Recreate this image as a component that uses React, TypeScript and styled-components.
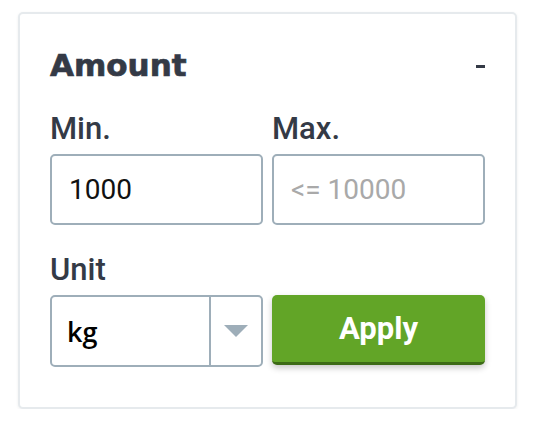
import styled, { createGlobalStyle } from 'styled-components';

const GlobalStyle = createGlobalStyle`
  html, body {
    margin: 0;
    padding: 0;
    background: #ffffff;
  }
  body {
    font-family: Roboto, "Liberation Sans", sans-serif;
  }
`;

const Page = styled.div`
  padding: 12px 0 0 18px;
`;

const Card = styled.section`
  box-sizing: border-box;
  width: 499px;
  height: 397px;
  padding: 33px 30px 0 30px;
  background: #ffffff;
  border: 2px solid #e6eaed;
  border-radius: 5px;
  box-shadow: 0 1px 3px rgba(40, 55, 70, 0.08);
`;

const Header = styled.header`
  display: flex;
  justify-content: space-between;
  align-items: center;
  height: 36px;
  margin-bottom: 28px;
`;

const Title = styled.h2`
  margin: 0;
  font-family: "DejaVu Sans", sans-serif;
  font-weight: 700;
  font-size: 31px;
  line-height: 36px;
  color: #343a46;
  -webkit-text-stroke: 0.7px #343a46;
`;

const Collapse = styled.span`
  display: block;
  width: 9px;
  height: 3px;
  margin-top: 2px;
  background: #343a46;
`;

const Grid = styled.div`
  display: grid;
  grid-template-columns: 213px 213px;
  column-gap: 9px;
  row-gap: 27px;
`;

const Field = styled.label`
  display: flex;
  flex-direction: column;
  gap: 7px;
`;

const Label = styled.span`
  font-family: Roboto, sans-serif;
  font-weight: 500;
  font-size: 31px;
  line-height: 36px;
  color: #343a46;
`;

const Input = styled.input`
  box-sizing: border-box;
  width: 100%;
  height: 71px;
  padding: 0 17px;
  border: 2px solid #9eaeb9;
  border-radius: 5px;
  font-family: Roboto, sans-serif;
  font-weight: 400;
  font-size: 28px;
  color: #111111;
  outline: none;
  &::placeholder {
    color: #a9a9a9;
  }
`;

const Select = styled.div`
  box-sizing: border-box;
  display: flex;
  height: 72px;
  border: 2px solid #9eaeb9;
  border-radius: 5px;
  overflow: hidden;
`;

const SelectValue = styled.div`
  flex: 1;
  display: flex;
  align-items: center;
  padding-left: 15px;
  font-family: "Open Sans", sans-serif;
  font-weight: 600;
  font-size: 27px;
  color: #000000;
`;

const SelectToggle = styled.div`
  width: 50px;
  display: flex;
  align-items: center;
  justify-content: center;
  border-left: 2px solid #9eaeb9;
`;

const Arrow = styled.span`
  width: 0;
  height: 0;
  border-left: 12px solid transparent;
  border-right: 12px solid transparent;
  border-top: 12px solid #9eaeb9;
`;

const ApplyButton = styled.button`
  align-self: end;
  box-sizing: border-box;
  height: 70px;
  margin-bottom: 2px;
  border: none;
  border-bottom: 3px solid #3d6b16;
  border-radius: 5px;
  background: #62a527;
  box-shadow: 0 3px 6px rgba(0, 0, 0, 0.22);
  color: #ffffff;
  font-family: Roboto, sans-serif;
  font-weight: 700;
  font-size: 31px;
  cursor: pointer;
`;

export default function App() {
  return (
    <>
      <GlobalStyle />
      <Page>
        <Card>
          <Header>
            <Title>Amount</Title>
            <Collapse />
          </Header>
          <Grid>
            <Field>
              <Label>Min.</Label>
              <Input defaultValue="1000" />
            </Field>
            <Field>
              <Label>Max.</Label>
              <Input placeholder="<= 10000" />
            </Field>
            <Field>
              <Label>Unit</Label>
              <Select>
                <SelectValue>kg</SelectValue>
                <SelectToggle>
                  <Arrow />
                </SelectToggle>
              </Select>
            </Field>
            <ApplyButton>Apply</ApplyButton>
          </Grid>
        </Card>
      </Page>
    </>
  );
}
